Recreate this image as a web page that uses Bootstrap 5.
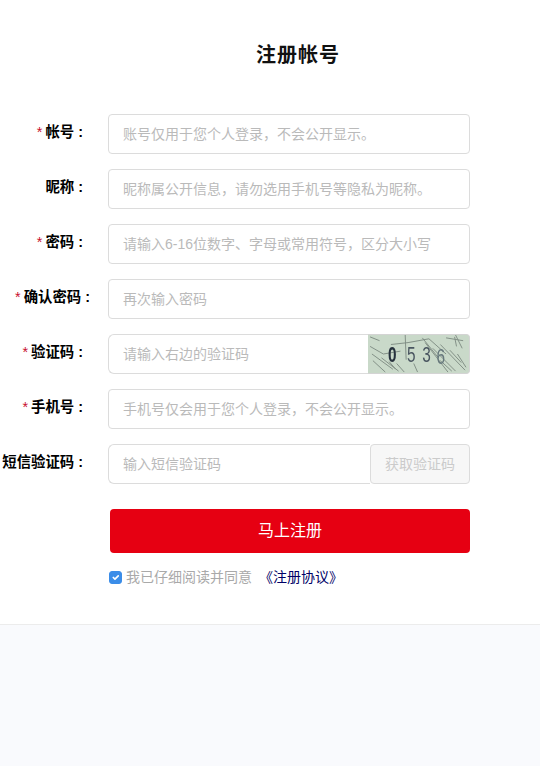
<!DOCTYPE html>
<html lang="zh-CN">
<head>
<meta charset="utf-8">
<title>注册帐号</title>
<link href="https://cdn.jsdelivr.net/npm/bootstrap@5.3.0/dist/css/bootstrap.min.css" rel="stylesheet">
<style>
html,body{margin:0;background:#fff;font-family:"Liberation Sans","Noto Sans CJK SC",sans-serif;}
body{height:766px;overflow:hidden;}
.reg-panel{height:625px;border-bottom:1px solid #ececec;padding-top:42px;}
.reg-title{font-size:20px;font-weight:700;line-height:26px;color:#111;margin:0 0 46px 256px;letter-spacing:1px;}
.reg-form{display:flex;flex-direction:column;gap:15px;width:470px;}
.reg-row{display:flex;align-items:center;height:40px;}
.reg-label{width:83px;flex:none;margin:0 25px 0 0;text-align:right;white-space:nowrap;font-size:14.4px;font-weight:700;color:#000;line-height:20px;padding-bottom:4px;}
.reg-label-wide{width:90px;margin-right:18px;}
.reg-colon{margin-left:4px;}
.reg-star{color:#c8102e;font-weight:400;margin-right:3px;}
.reg-input.form-control{height:40px;border:1px solid #dcdcdc;border-radius:4px;font-size:14px;padding:0 14px;color:#333;box-shadow:none;}
.reg-input::placeholder{color:#bababa;opacity:1;}
.reg-captcha{width:102px;height:40px;flex:none;display:block;border:1px solid #d4d4d4;border-left:0;border-radius:0 4px 4px 0;background:#c9d9c9;}
.reg-sms:disabled{width:100px;flex:none;height:40px;padding:0;font-size:14px;color:#cbcbcb;background:#f7f7f7;border:1px solid #dcdcdc;border-radius:4px;opacity:1;}
.reg-submit{display:block;width:360px;height:44px;margin:25px 0 0 110px;padding:0;background:#e60012;border:0;border-radius:4px;color:#fff;font-size:16px;}
.reg-submit:hover{background:#e60012;color:#fff;}
.reg-agree{display:flex;align-items:center;margin:14px 0 0 109px;font-size:14px;line-height:20px;color:#a9a9a9;}
.reg-check.form-check-input{width:13px;height:13px;margin:0 4px 0 0;background-color:#3b8de8;border-color:#3b8de8;border-radius:3px;flex:none;}
.reg-link{color:#000066;text-decoration:none;margin-left:7px;}
.reg-foot{height:141px;background:#f9fafd;}
</style>
</head>
<body>
<div class="reg-panel">
  <h1 class="reg-title">注册帐号</h1>
  <form class="reg-form">
    <div class="reg-row"><label class="reg-label" for="f1"><span class="reg-star">*</span>帐号<span class="reg-colon">:</span></label><input id="f1" class="form-control reg-input" placeholder="账号仅用于您个人登录，不会公开显示。"></div>
    <div class="reg-row"><label class="reg-label" for="f2">昵称<span class="reg-colon">:</span></label><input id="f2" class="form-control reg-input" placeholder="昵称属公开信息，请勿选用手机号等隐私为昵称。"></div>
    <div class="reg-row"><label class="reg-label" for="f3"><span class="reg-star">*</span>密码<span class="reg-colon">:</span></label><input id="f3" class="form-control reg-input" placeholder="请输入6-16位数字、字母或常用符号，区分大小写"></div>
    <div class="reg-row"><label class="reg-label reg-label-wide" for="f4"><span class="reg-star">*</span>确认密码<span class="reg-colon">:</span></label><input id="f4" class="form-control reg-input" placeholder="再次输入密码"></div>
    <div class="reg-row"><label class="reg-label" for="f5"><span class="reg-star">*</span>验证码<span class="reg-colon">:</span></label>
      <div class="d-flex flex-grow-1">
        <input id="f5" class="form-control reg-input rounded-0 rounded-start border-end-0" placeholder="请输入右边的验证码">
        <svg class="reg-captcha" viewBox="0 0 102 40" role="img" aria-label="验证码图片">
          <defs><filter id="soft"><feGaussianBlur stdDeviation="0.35"/></filter></defs>
          <rect width="102" height="40" fill="#c9d9c9"/>
          <g fill="none" stroke="#7f8d84" stroke-width="1" filter="url(#soft)">
            <path d="M0 12 14 20 32 17M2 20 24 36M3 27 16 39M12 24 30 38M28 30 36 39M20 28 27 36M37 0 38 26M22 10 40 8 62 4M55 3 72 24M58 8 82 39M62 4 80 20M66 14 90 38M74 10 100 37M80 3 98 6M89 2 91 12M92 20 101 34M74 27 86 38M84 16 96 29M0 2 10 6M90 0 97 14M46 30 50 39"/>
          </g>
          <g filter="url(#soft)" font-family="Liberation Sans, sans-serif" font-size="23">
            <text x="19" y="28" textLength="9" lengthAdjust="spacingAndGlyphs" fill="#27303c" font-weight="700">0</text>
            <text x="39" y="28" textLength="9" lengthAdjust="spacingAndGlyphs" fill="#4a5660">5</text>
            <text x="55" y="28" textLength="9" lengthAdjust="spacingAndGlyphs" fill="#4a5660">3</text>
            <text x="70" y="31" textLength="9" lengthAdjust="spacingAndGlyphs" fill="#66787c">6</text>
          </g>
        </svg>
      </div>
    </div>
    <div class="reg-row"><label class="reg-label" for="f6"><span class="reg-star">*</span>手机号<span class="reg-colon">:</span></label><input id="f6" class="form-control reg-input" placeholder="手机号仅会用于您个人登录，不会公开显示。"></div>
    <div class="reg-row"><label class="reg-label" for="f7">短信验证码<span class="reg-colon">:</span></label>
      <div class="d-flex flex-grow-1">
        <input id="f7" class="form-control reg-input rounded-0 rounded-start border-end-0" placeholder="输入短信验证码">
        <button type="button" class="btn reg-sms" disabled>获取验证码</button>
      </div>
    </div>
  </form>
  <button type="button" class="btn reg-submit">马上注册</button>
  <div class="reg-agree"><input class="form-check-input reg-check" type="checkbox" checked id="f8"><label for="f8">我已仔细阅读并同意</label><a class="reg-link" href="#">《注册协议》</a></div>
</div>
<div class="reg-foot"></div>
<script src="https://cdn.jsdelivr.net/npm/bootstrap@5.3.0/dist/js/bootstrap.bundle.min.js"></script>
</body>
</html>
